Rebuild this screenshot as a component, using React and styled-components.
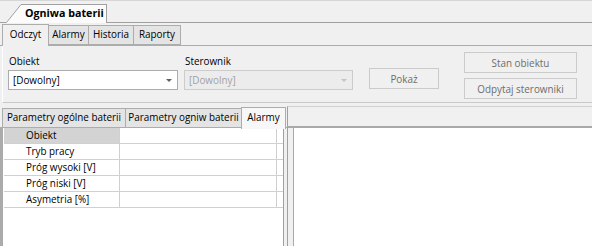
import React from "react";
import styled, { createGlobalStyle } from "styled-components";

const Global = createGlobalStyle`
  html, body { margin: 0; padding: 0; background: #f0f0f0; }
  body { font-family: "Open Sans", "Noto Sans", sans-serif; font-size: 9.9px; color: #000; }
  * { box-sizing: border-box; }
`;

const Root = styled.div`
  width: 592px;
  height: 246px;
  background: #f0f0f0;
  display: flex;
  flex-direction: column;
  overflow: hidden;
`;

const DocStrip = styled.div`
  height: 23px;
  flex: none;
  display: flex;
  align-items: flex-end;
  padding-left: 6px;
  border-top: 1px solid #d6d6d6;
  border-bottom: 1px solid #a0a0a0;
`;

const DocTab = styled.div`
  display: flex;
  align-items: flex-end;
  height: 19px;
  margin-bottom: -1px;
`;

const DocTabBody = styled.div`
  height: 19px;
  width: 85px;
  padding-left: 3px;
  background: #fbfbfb;
  border-top: 1px solid #a0a0a0;
  border-right: 1px solid #a0a0a0;
  font-weight: 700;
  font-size: 10.7px;
  line-height: 17px;
  white-space: nowrap;
`;

const TabStrip = styled.div`
  height: 23px;
  flex: none;
  display: flex;
  align-items: flex-end;
  padding-left: 2px;
  border-bottom: 1px solid #acacac;
`;

const Tab = styled.div`
  width: ${(p) => p.$w}px;
  height: ${(p) => (p.$active ? 22 : 20)}px;
  margin-bottom: ${(p) => (p.$active ? -1 : 0)}px;
  margin-left: -1px;
  text-align: center;
  background: ${(p) => (p.$active ? p.$activeBg || "#f0f0f0" : "#e4e4e4")};
  border: 1px solid #acacac;
  border-bottom: ${(p) => (p.$active ? "none" : "1px solid #acacac")};
  line-height: ${(p) => (p.$active ? 19 : 17)}px;
  white-space: nowrap;
  position: relative;
  z-index: ${(p) => (p.$active ? 1 : 0)};
  &:first-child { margin-left: 0; }
`;

const FilterPage = styled.div`
  height: 57px;
  flex: none;
  display: flex;
  align-items: flex-start;
  padding: 6px 0 0 5px;
  border-left: 1px solid #fff;
  margin-left: 2px;
  border-bottom: 1px solid #c9c9c9;
`;

const Field = styled.div`
  width: ${(p) => p.$w}px;
  margin-left: ${(p) => p.$ml || 0}px;
  padding-top: 2px;
  display: flex;
  flex-direction: column;
  gap: 2px;
`;

const Label = styled.div`
  line-height: 14px;
  height: 14px;
  padding-left: 1px;
`;

const Combo = styled.div`
  height: 20px;
  display: flex;
  align-items: center;
  justify-content: space-between;
  padding: 0 5px 0 4px;
  background: ${(p) => (p.$disabled ? "#ececec" : "#fff")};
  border: 1px solid ${(p) => (p.$disabled ? "#cccccc" : "#acacac")};
  color: ${(p) => (p.$disabled ? "#a2a2a2" : "#000")};
`;

const Arrow = styled.span`
  width: 0;
  height: 0;
  border-left: 3px solid transparent;
  border-right: 3px solid transparent;
  border-top: 3px solid ${(p) => (p.$disabled ? "#c4c4c4" : "#606060")};
`;

const Button = styled.div`
  width: ${(p) => p.$w}px;
  height: 21px;
  display: flex;
  align-items: center;
  justify-content: center;
  background: #f0f0f0;
  border: 1px solid #cbcbcb;
  color: #6d6d6d;
  white-space: nowrap;
`;

const PokazWrap = styled.div`
  margin-left: 16px;
  margin-top: 16px;
`;

const ButtonCol = styled.div`
  margin-left: 25px;
  display: flex;
  flex-direction: column;
  gap: 5px;
`;

const Lower = styled.div`
  flex: 1;
  display: flex;
  min-height: 0;
`;

const LeftPane = styled.div`
  width: 287px;
  flex: none;
  display: flex;
  flex-direction: column;
`;

const InnerTabs = styled.div`
  height: 25px;
  flex: none;
  display: flex;
  align-items: flex-end;
  padding-left: 2px;
`;

const GridPage = styled.div`
  flex: 1;
  display: flex;
  border-top: 1px solid #acacac;
  margin-top: -1px;
`;

const GridBox = styled.div`
  width: 284px;
  flex: none;
  background: #fff;
  border-left: 3px solid #ababab;
  padding-left: 1px;
  border-right: 1px solid #a0a0a0;
`;

const GridRow = styled.div`
  display: grid;
  grid-template-columns: 116px 157px;
  height: 16px;
  border-bottom: 1px solid #d0d0d0;
`;

const Cell = styled.div`
  line-height: 15px;
  padding-left: ${(p) => (p.$name ? 22 : 4)}px;
  background: ${(p) => (p.$sel ? "#d3d3d3" : "#fff")};
  border-right: 1px solid #d0d0d0;
  white-space: nowrap;
  overflow: hidden;
`;

const RightPane = styled.div`
  flex: 1;
  display: flex;
  flex-direction: column;
  border-left: 1px solid #a0a0a0;
  margin-top: 3px;
  border-top: 1px solid #d0d0d0;
`;

const RightHeader = styled.div`
  height: 21px;
  flex: none;
  border-bottom: 2px solid #a9a9a9;
`;

const RightBody = styled.div`
  flex: 1;
  margin-left: 5px;
  border-left: 1px solid #a9a9a9;
  background: #fff;
`;

const rows = ["Obiekt", "Tryb pracy", "Próg wysoki [V]", "Próg niski [V]", "Asymetria [%]"];

export default function App() {
  return (
    <>
      <Global />
      <Root>
        <DocStrip>
          <DocTab>
            <svg width="16" height="19" viewBox="0 0 16 19" style={{ display: "block" }}>
              <path d="M0 19 L15 1 L16 1 L16 19 Z" fill="#fbfbfb" />
              <path d="M0.5 18.5 L15 0.5 L16 0.5" fill="none" stroke="#a0a0a0" strokeWidth="1" />
            </svg>
            <DocTabBody>Ogniwa baterii</DocTabBody>
          </DocTab>
        </DocStrip>
        <TabStrip>
          <Tab $active $w={47}>Odczyt</Tab>
          <Tab $w={41}>Alarmy</Tab>
          <Tab $w={46}>Historia</Tab>
          <Tab $w={48}>Raporty</Tab>
        </TabStrip>
        <FilterPage>
          <Field $w={170}>
            <Label>Obiekt</Label>
            <Combo>
              <span>[Dowolny]</span>
              <Arrow />
            </Combo>
          </Field>
          <Field $w={169} $ml={6}>
            <Label>Sterownik</Label>
            <Combo $disabled>
              <span>[Dowolny]</span>
              <Arrow $disabled />
            </Combo>
          </Field>
          <PokazWrap>
            <Button $w={70}>Pokaż</Button>
          </PokazWrap>
          <ButtonCol>
            <Button $w={113}>Stan obiektu</Button>
            <Button $w={113}>Odpytaj sterowniki</Button>
          </ButtonCol>
        </FilterPage>
        <Lower>
          <LeftPane>
            <InnerTabs>
              <Tab $w={124}>Parametry ogólne baterii</Tab>
              <Tab $w={117}>Parametry ogniw baterii</Tab>
              <Tab $active $activeBg="#f7f7f7" $w={45}>Alarmy</Tab>
            </InnerTabs>
            <GridPage>
              <GridBox>
                {rows.map((r, i) => (
                  <GridRow key={r}>
                    <Cell $name $sel={i === 0}>{r}</Cell>
                    <Cell />
                  </GridRow>
                ))}
              </GridBox>
            </GridPage>
          </LeftPane>
          <RightPane>
            <RightHeader />
            <RightBody />
          </RightPane>
        </Lower>
      </Root>
    </>
  );
}
